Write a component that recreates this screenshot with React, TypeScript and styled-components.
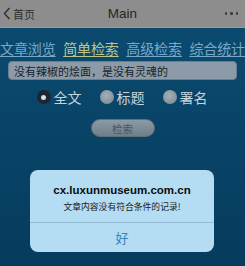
import React, { useState } from 'react';
import styled, { createGlobalStyle } from 'styled-components';

const GlobalStyle = createGlobalStyle`
  html, body {
    margin: 0;
    padding: 0;
    width: 245px;
    height: 266px;
    overflow: hidden;
    background: #0a4467;
    font-family: "Noto Sans CJK SC", "Noto Sans", sans-serif;
  }
`;

const tabs = ['文章浏览', '简单检索', '高级检索', '综合统计'];
const options = ['全文', '标题', '署名'];

const App: React.FC = () => {
  const [activeTab] = useState(1);
  const [mode, setMode] = useState(0);

  return (
    <>
      <GlobalStyle />
      <Page>
        <NavBar>
          <BackLink>
            <svg width="8" height="13" viewBox="0 0 8 13">
              <path d="M6.5 1 L1.5 6.5 L6.5 12" fill="none" stroke="#2e2e2e" strokeWidth="1.4" />
            </svg>
            <span>首页</span>
          </BackLink>
          <NavTitle>Main</NavTitle>
          <MoreDots>
            <Dot />
            <Dot />
            <Dot />
          </MoreDots>
        </NavBar>

        <Content>
          <TabRow>
            {tabs.map((t, i) => (
              <Tab key={t} $active={i === activeTab}>{t}</Tab>
            ))}
          </TabRow>

          <SearchInput defaultValue="没有辣椒的烩面，是没有灵魂的" />

          <RadioRow>
            {options.map((o, i) => (
              <RadioLabel key={o} onClick={() => setMode(i)}>
                <RadioDot $checked={i === mode} />
                {o}
              </RadioLabel>
            ))}
          </RadioRow>

          <SearchButton>检索</SearchButton>

          <Alert>
            <AlertBody>
              <AlertTitle>cx.luxunmuseum.com.cn</AlertTitle>
              <AlertMessage>文章内容没有符合条件的记录!</AlertMessage>
            </AlertBody>
            <AlertAction>好</AlertAction>
          </Alert>
        </Content>
      </Page>
    </>
  );
};

const Page = styled.div`
  width: 245px;
  height: 266px;
  display: flex;
  flex-direction: column;
  overflow: hidden;
`;

const NavBar = styled.div`
  height: 27px;
  background: #8d8d8d;
  border-bottom: 1px solid #9a9a9a;
  display: flex;
  align-items: center;
  justify-content: space-between;
  padding: 0 6px 0 3px;
  position: relative;
`;

const BackLink = styled.div`
  display: flex;
  align-items: center;
  gap: 2px;
  font-size: 11px;
  color: #2e2e2e;
`;

const NavTitle = styled.div`
  position: absolute;
  left: 0;
  right: 0;
  text-align: center;
  font-family: "Liberation Sans", Arial, sans-serif;
  font-size: 13.5px;
  color: #262626;
  pointer-events: none;
`;

const MoreDots = styled.div`
  display: flex;
  gap: 3px;
  padding-right: 1px;
`;

const Dot = styled.span`
  width: 2.5px;
  height: 2.5px;
  border-radius: 50%;
  background: #3a3a3a;
`;

const Content = styled.div`
  flex: 1;
  background: linear-gradient(#0b4a6f, #063c5d);
  display: flex;
  flex-direction: column;
  align-items: center;
`;

const TabRow = styled.div`
  width: 245px;
  display: flex;
  justify-content: space-between;
  margin-top: 11px;
`;

const Tab = styled.span<{ $active: boolean }>`
  font-size: 14px;
  line-height: 18px;
  letter-spacing: -0.1px;
  color: ${({ $active }) => ($active ? '#b9c98a' : '#78a9c9')};
  text-decoration: underline;
  text-underline-offset: 2px;
  text-decoration-thickness: 1px;
`;

const SearchInput = styled.input`
  box-sizing: border-box;
  width: 229px;
  height: 19px;
  margin-top: 4px;
  padding: 0 5px;
  border: 1px solid #6c7e8c;
  border-radius: 4px;
  background: #8c9ba7;
  color: #17222c;
  font-family: "Noto Sans CJK SC", sans-serif;
  font-size: 11px;
  outline: none;
`;

const RadioRow = styled.div`
  display: flex;
  gap: 18px;
  margin-top: 9px;
  margin-left: -1px;
`;

const RadioLabel = styled.label`
  display: flex;
  align-items: center;
  gap: 3px;
  font-size: 14px;
  line-height: 16px;
  color: #c6d4dd;
  cursor: pointer;
`;

const RadioDot = styled.span<{ $checked: boolean }>`
  box-sizing: border-box;
  width: 14px;
  height: 14px;
  border-radius: 50%;
  display: flex;
  align-items: center;
  justify-content: center;
  background: ${({ $checked }) =>
    $checked ? '#1c2630' : 'radial-gradient(circle at 45% 40%, #a3b0ba, #76858f)'};
  &::after {
    content: '';
    width: 5px;
    height: 5px;
    border-radius: 50%;
    background: #d7dde2;
    display: ${({ $checked }) => ($checked ? 'block' : 'none')};
  }
`;

const SearchButton = styled.button`
  width: 64px;
  height: 18px;
  margin-top: 14px;
  border: 1px solid #5f707c;
  border-radius: 9px;
  background: linear-gradient(#8c9aa4, #6f7f8a);
  color: #44566a;
  font-family: "Noto Sans CJK SC", sans-serif;
  font-size: 10.5px;
  padding: 0;
`;

const Alert = styled.div`
  width: 184px;
  margin-top: 33px;
  margin-left: -1px;
  background: #b4dcf2;
  border-radius: 8px;
  display: flex;
  flex-direction: column;
`;

const AlertBody = styled.div`
  display: flex;
  flex-direction: column;
  align-items: center;
  padding: 12px 6px 9px;
  border-bottom: 1px solid #94bcd4;
`;

const AlertTitle = styled.div`
  font-family: "Liberation Sans", Arial, sans-serif;
  font-weight: bold;
  font-size: 11.5px;
  line-height: 16px;
  color: #0d0d0d;
`;

const AlertMessage = styled.div`
  font-size: 8.8px;
  line-height: 13px;
  margin-top: 2px;
  color: #1b1b1b;
`;

const AlertAction = styled.div`
  height: 29px;
  display: flex;
  align-items: center;
  justify-content: center;
  font-size: 13px;
  color: #3b84b8;
`;

export default App;
